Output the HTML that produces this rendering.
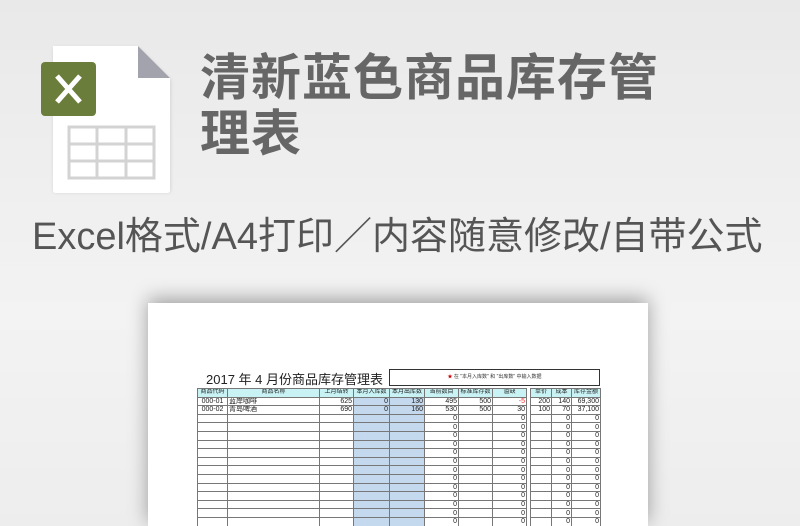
<!DOCTYPE html>
<html><head><meta charset="utf-8"><style>
*{margin:0;padding:0;box-sizing:border-box}
html,body{width:800px;height:526px;overflow:hidden}
body{background:linear-gradient(#e9e9e9,#f3f3f3 60%,#ededed);font-family:"Liberation Sans","Noto Sans CJK SC",sans-serif;position:relative}
.t{position:absolute;left:200px;font-size:50px;font-weight:bold;color:#666;line-height:56px;letter-spacing:1px}
.sub{position:absolute;left:32px;top:214px;font-size:38px;color:#555;white-space:nowrap;line-height:46px}
.paper{position:absolute;left:148px;top:303px;width:500px;height:223px;background:#fff;box-shadow:0 -4px 18px rgba(0,0,0,.35)}
.title2{position:absolute;left:206px;top:369px;font-size:13px;color:#222;white-space:nowrap}
.note{position:absolute;left:389px;top:369px;width:211px;height:17px;border:1px solid #333;font-size:5px;text-align:center;line-height:15px;color:#333}
table{position:absolute;left:197px;top:388px;border-collapse:collapse;table-layout:fixed;font-size:7px;color:#222}
td{border:1px solid #777;height:8.6px;line-height:7px;padding:0 1px;text-align:right;white-space:nowrap;overflow:hidden}
tr.h td{background:#c8f2f4;text-align:center;font-size:6px}
td.b{background:#c5d9ee}
td.g{background:#fff!important;border-top:none;border-bottom:none}
</style></head><body>
<svg style="position:absolute;left:38px;top:42px" width="140" height="156">
<defs><filter id="s"><feGaussianBlur stdDeviation="2"/></filter></defs>
<path d="M16 6 H100 L132 38 V150 H16Z" fill="#000" opacity=".15" filter="url(#s)"/>
<path d="M15 4 H100 L132 36 V148 Q132 151 129 151 H18 Q15 151 15 148Z" fill="#fff"/>
<path d="M100 4 V36 H132Z" fill="#a3a3ad"/>
<rect x="3" y="20" width="55" height="54" rx="4" fill="#6b7d3a"/>
<path d="M19 34 L42 60 M42 34 L19 60" stroke="#fff" stroke-width="5"/>
<g fill="none" stroke="#d3d3d3" stroke-width="3"><rect x="31" y="85" width="85" height="51"/><path d="M31 102H116M31 119H116M59 85V136M88 85V136"/></g>
</svg>
<div class="t" style="top:50px">清新蓝色商品库存管</div>
<div class="t" style="top:106px">理表</div>
<div class="sub">Excel格式/A4打印／内容随意修改/自带公式</div>
<div class="paper"></div>
<div class="title2">2017 年 4 月份商品库存管理表</div>
<div class="note"><span style="color:#c00">★</span> 在 "本月入库数" 和 "出库数" 中输入数据</div>
<table>
<colgroup><col style="width:30px"><col style="width:92px"><col style="width:34px"><col style="width:36px"><col style="width:35px"><col style="width:34px"><col style="width:34px"><col style="width:34px"><col style="width:4px"><col style="width:21px"><col style="width:20px"><col style="width:29px"></colgroup>
<tr class="h"><td>商品代码</td><td>商品名称</td><td>上月结转</td><td>本月入库数</td><td>本月出库数</td><td>当前数目</td><td>标准库存数</td><td>溢缺</td><td class="g"></td><td>单价</td><td>成本</td><td>库存金额</td></tr>
<tr><td style="text-align:center">000-01</td><td style="text-align:left">蓝岸咖啡</td><td>625</td><td class="b">0</td><td class="b">130</td><td>495</td><td>500</td><td style="color:#e33">-5</td><td class="g"></td><td>200</td><td>140</td><td>69,300</td></tr>
<tr><td style="text-align:center">000-02</td><td style="text-align:left">青岛啤酒</td><td>690</td><td class="b">0</td><td class="b">160</td><td>530</td><td>500</td><td>30</td><td class="g"></td><td>100</td><td>70</td><td>37,100</td></tr>
<tr><td></td><td></td><td></td><td class="b"></td><td class="b"></td><td>0</td><td></td><td>0</td><td class="g"></td><td></td><td>0</td><td>0</td></tr>
<tr><td></td><td></td><td></td><td class="b"></td><td class="b"></td><td>0</td><td></td><td>0</td><td class="g"></td><td></td><td>0</td><td>0</td></tr>
<tr><td></td><td></td><td></td><td class="b"></td><td class="b"></td><td>0</td><td></td><td>0</td><td class="g"></td><td></td><td>0</td><td>0</td></tr>
<tr><td></td><td></td><td></td><td class="b"></td><td class="b"></td><td>0</td><td></td><td>0</td><td class="g"></td><td></td><td>0</td><td>0</td></tr>
<tr><td></td><td></td><td></td><td class="b"></td><td class="b"></td><td>0</td><td></td><td>0</td><td class="g"></td><td></td><td>0</td><td>0</td></tr>
<tr><td></td><td></td><td></td><td class="b"></td><td class="b"></td><td>0</td><td></td><td>0</td><td class="g"></td><td></td><td>0</td><td>0</td></tr>
<tr><td></td><td></td><td></td><td class="b"></td><td class="b"></td><td>0</td><td></td><td>0</td><td class="g"></td><td></td><td>0</td><td>0</td></tr>
<tr><td></td><td></td><td></td><td class="b"></td><td class="b"></td><td>0</td><td></td><td>0</td><td class="g"></td><td></td><td>0</td><td>0</td></tr>
<tr><td></td><td></td><td></td><td class="b"></td><td class="b"></td><td>0</td><td></td><td>0</td><td class="g"></td><td></td><td>0</td><td>0</td></tr>
<tr><td></td><td></td><td></td><td class="b"></td><td class="b"></td><td>0</td><td></td><td>0</td><td class="g"></td><td></td><td>0</td><td>0</td></tr>
<tr><td></td><td></td><td></td><td class="b"></td><td class="b"></td><td>0</td><td></td><td>0</td><td class="g"></td><td></td><td>0</td><td>0</td></tr>
<tr><td></td><td></td><td></td><td class="b"></td><td class="b"></td><td>0</td><td></td><td>0</td><td class="g"></td><td></td><td>0</td><td>0</td></tr>
<tr><td></td><td></td><td></td><td class="b"></td><td class="b"></td><td>0</td><td></td><td>0</td><td class="g"></td><td></td><td>0</td><td>0</td></tr>
</table>
</body></html>
